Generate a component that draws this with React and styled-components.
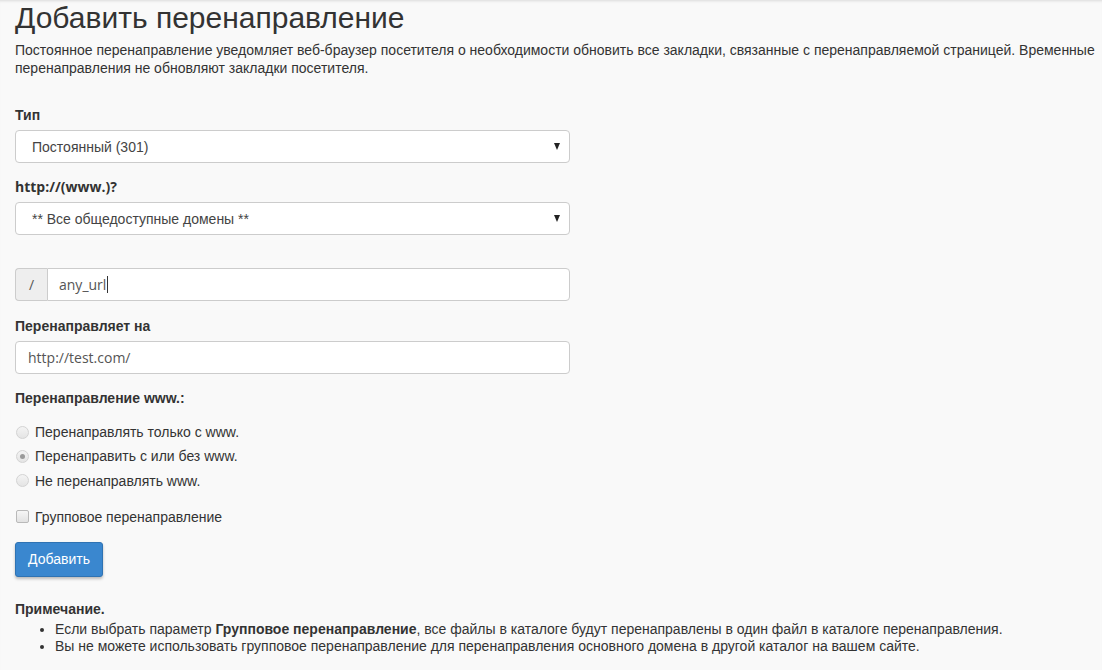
import React from 'react'
import styled, { createGlobalStyle } from 'styled-components'

const GlobalStyle = createGlobalStyle`
    body {
        margin: 0;
        background: #f9f9f9;
        font-family: "Liberation Sans", Arial, sans-serif;
        font-size: 14px;
        color: #333;
    }
`

const Page = styled.div`
    padding: 0 6px 20px 15px;
    box-shadow: inset 0 3px 3px -2px rgba(0, 0, 0, 0.12);
`

const Title = styled.h1`
    margin: 0;
    padding-top: 1px;
    font-size: 30px;
    font-weight: normal;
    line-height: 33px;
    color: #333;
`

const Intro = styled.p`
    margin: 7px 0 0 0;
    line-height: 18px;
`

const Group = styled.div`
    margin-top: ${p => p.top || 0}px;
`

const Label = styled.div`
    font-weight: bold;
    line-height: 20px;
    margin-bottom: 5px;
    font-family: ${p => (p.open ? '"Open Sans", sans-serif' : '"Liberation Sans", Arial, sans-serif')};
`

const Select = styled.div`
    width: 555px;
    height: 33px;
    box-sizing: border-box;
    border: 1px solid #ccc;
    border-radius: 4px;
    background: #fff;
    display: flex;
    align-items: center;
    justify-content: space-between;
    padding: 0 9px 0 16px;
    color: #444;
`

const Arrow = styled.span`
    width: 0;
    height: 0;
    border-left: 3.5px solid transparent;
    border-right: 3.5px solid transparent;
    border-top: 7px solid #222;
`

const InputGroup = styled.div`
    width: 555px;
    height: 33px;
    display: flex;
`

const Addon = styled.div`
    width: 32px;
    box-sizing: border-box;
    border: 1px solid #ccc;
    border-right: none;
    border-radius: 4px 0 0 4px;
    background: #eee;
    display: flex;
    align-items: center;
    justify-content: center;
    color: #555;
    font-family: "Open Sans", sans-serif;
`

const TextBox = styled.div`
    flex: 1;
    box-sizing: border-box;
    height: 33px;
    width: ${p => (p.solo ? '555px' : 'auto')};
    border: 1px solid #ccc;
    border-radius: ${p => (p.solo ? '4px' : '0 4px 4px 0')};
    background: #fff;
    display: flex;
    align-items: center;
    padding-left: ${p => (p.solo ? '12px' : '11px')};
    color: #555;
    font-family: "Open Sans", sans-serif;
`

const Caret = styled.span`
    display: inline-block;
    width: 1px;
    height: 17px;
    background: #333;
    margin-left: 1px;
`

const Options = styled.div`
    display: flex;
    flex-direction: column;
    gap: 4.3px;
    margin-top: ${p => p.top}px;
`

const Option = styled.label`
    display: flex;
    align-items: center;
    gap: 6px;
    padding-left: 1px;
    line-height: 20px;
    color: #333;
`

const Radio = styled.span`
    width: 11px;
    height: 11px;
    border-radius: 50%;
    border: 1px solid #d3d3d3;
    background: linear-gradient(#f4f4f4, #e4e4e4);
    display: flex;
    align-items: center;
    justify-content: center;
    &::after {
        content: '';
        width: 5px;
        height: 5px;
        border-radius: 50%;
        background: ${p => (p.checked ? '#9a9a9a' : 'transparent')};
    }
`

const Check = styled.span`
    width: 11px;
    height: 11px;
    border-radius: 2px;
    border: 1px solid #b9b9b9;
    background: linear-gradient(#f6f6f6, #e2e2e2);
`

const Button = styled.button`
    display: block;
    margin-top: 15px;
    width: 88px;
    height: 35px;
    border: 1px solid #2f73b3;
    border-radius: 3px;
    background: #3a87cf;
    color: #fff;
    font-family: "Liberation Sans", Arial, sans-serif;
    font-size: 14px;
    box-shadow: 0 2px 3px rgba(0, 0, 0, 0.25);
`

const Note = styled.div`
    margin-top: 22px;
`

const NoteTitle = styled.div`
    font-weight: bold;
    line-height: 20px;
`

const List = styled.ul`
    margin: 2px 0 0 0;
    padding-left: 40px;
    line-height: 17px;
`

export default function App() {
    return (
        <>
            <GlobalStyle />
            <Page>
                <Title>Добавить перенаправление</Title>
                <Intro>
                    Постоянное перенаправление уведомляет веб-браузер посетителя о необходимости обновить все закладки, связанные с перенаправляемой страницей. Временные перенаправления не обновляют закладки посетителя.
                </Intro>

                <Group top={28}>
                    <Label>Тип</Label>
                    <Select>
                        <span>Постоянный (301)</span>
                        <Arrow />
                    </Select>
                </Group>

                <Group top={14}>
                    <Label open>http://(www.)?</Label>
                    <Select>
                        <span>** Все общедоступные домены **</span>
                        <Arrow />
                    </Select>
                </Group>

                <Group top={33}>
                    <InputGroup>
                        <Addon>/</Addon>
                        <TextBox>any_url<Caret /></TextBox>
                    </InputGroup>
                </Group>

                <Group top={15}>
                    <Label>Перенаправляет на</Label>
                    <TextBox solo>http://test.com/</TextBox>
                </Group>

                <Group top={14}>
                    <Label>Перенаправление www.:</Label>
                    <Options top={14}>
                        <Option><Radio />Перенаправлять только с www.</Option>
                        <Option><Radio checked />Перенаправить с или без www.</Option>
                        <Option><Radio />Не перенаправлять www.</Option>
                    </Options>
                    <Options top={16}>
                        <Option><Check />Групповое перенаправление</Option>
                    </Options>
                </Group>

                <Button>Добавить</Button>

                <Note>
                    <NoteTitle>Примечание.</NoteTitle>
                    <List>
                        <li>Если выбрать параметр <b>Групповое перенаправление</b>, все файлы в каталоге будут перенаправлены в один файл в каталоге перенаправления.</li>
                        <li>Вы не можете использовать групповое перенаправление для перенаправления основного домена в другой каталог на вашем сайте.</li>
                    </List>
                </Note>
            </Page>
        </>
    )
}
